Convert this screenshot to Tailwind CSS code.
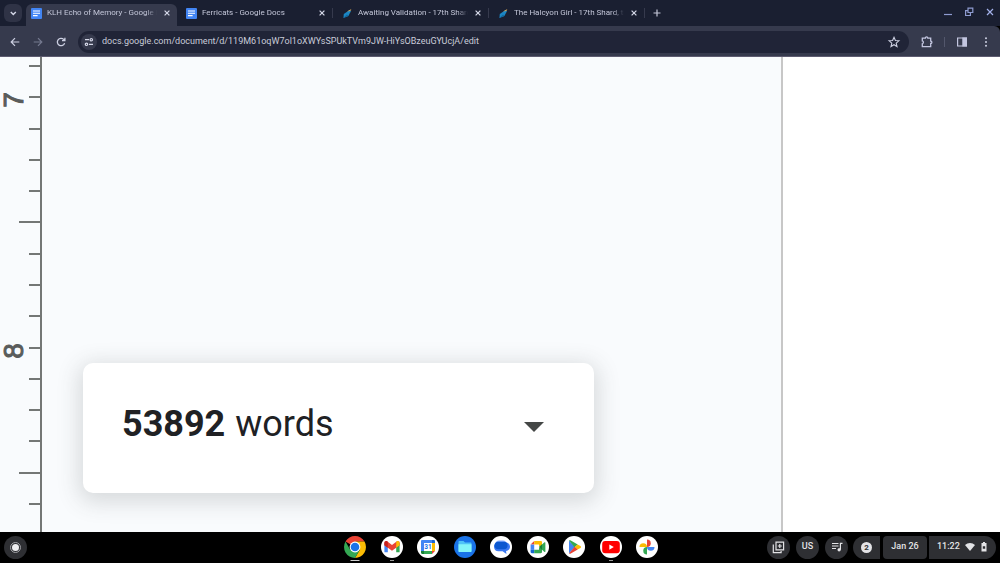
<!DOCTYPE html>
<html lang="en">

<head>
  <meta charset="UTF-8">
  <meta name="viewport" content="width=device-width, initial-scale=1.0">
  <title>KLH Echo of Memory - Google Docs</title>
  <script src="https://cdn.jsdelivr.net/npm/@tailwindcss/browser@4"></script>
</head>

<body class="h-screen flex flex-col overflow-hidden bg-black font-['Roboto',sans-serif]">

  <!-- Tab strip -->
  <header class="h-[26px] shrink-0 flex bg-[#1a1f31] text-[#c3c6d8]">
    <button aria-label="Search tabs" class="w-[18px] h-[18px] ml-1 mt-1 rounded-md bg-[#2f3346] flex items-center justify-center">
      <svg class="w-[18px] h-[18px]" viewBox="0 0 18 18" fill="none" stroke="#d5d8e8" stroke-width="1.4"><path d="M6.8 7.9 9.3 10.4l2.5-2.5" /></svg>
    </button>
    <nav id="tabs" class="flex ml-1" aria-label="Tabs"></nav>
    <button aria-label="New tab" class="w-6 h-[26px] flex items-center justify-center">
      <svg class="w-2 h-2" viewBox="0 0 8 8" stroke="#c3c6d8" stroke-width="1.2"><path d="M4 .5v7M.5 4h7" /></svg>
    </button>
    <div class="ml-auto flex items-center pr-1 gap-[9px] h-6">
      <button aria-label="Minimize" class="w-3 h-3"><svg viewBox="0 0 12 12" stroke="#8e9bd0" stroke-width="1.2"><path d="M2 8.5h8" /></svg></button>
      <button aria-label="Restore" class="w-3 h-3"><svg viewBox="0 0 12 12" fill="none" stroke="#8e9bd0" stroke-width="1.2"><path d="M5 2.2h4.8v4.3H5zM4.4 4.7H2.6v4.8h4.8V7" /></svg></button>
      <button aria-label="Close" class="w-3 h-3"><svg viewBox="0 0 12 12" stroke="#a3b1ea" stroke-width="1.2"><path d="m3 3 6 6M9 3 3 9" /></svg></button>
    </div>
  </header>

  <!-- Toolbar -->
  <div class="h-[31px] shrink-0 flex items-center bg-[#363a4d] border-b border-[#5d5b70] rounded-tr-md pt-px pr-2">
    <div class="flex w-[78px] pl-[9px] gap-[11px]">
      <button aria-label="Back" class="w-3 h-3"><svg viewBox="0 0 12 12" fill="none" stroke="#cdd0e2" stroke-width="1.2"><path d="M10.3 6H2.4M6 2.2 2.2 6 6 9.8" /></svg></button>
      <button aria-label="Forward" class="w-3 h-3"><svg viewBox="0 0 12 12" fill="none" stroke="#757a90" stroke-width="1.2"><path d="M1.7 6h7.9M6 2.2 9.8 6 6 9.8" /></svg></button>
      <button aria-label="Reload" class="w-3 h-3"><svg viewBox="0 0 12 12" fill="none" stroke="#cdd0e2" stroke-width="1.3"><path d="M9.6 7.1A3.7 3.7 0 1 1 8.7 3.4L9.8 4.5M9.9 1.8v2.9H7" /></svg></button>
    </div>
    <div class="flex-1 h-[22px] rounded-full bg-[#202437] flex items-center pl-[3px] pr-2">
      <button aria-label="View site information" class="w-4 h-4 rounded-full bg-[#363a4d] flex items-center justify-center">
        <svg class="w-[10px] h-[10px]" viewBox="0 0 10 10" fill="none" stroke="#d5d8e8" stroke-width="1.2"><path d="M5 2.7H1M9 7.3H5" /><circle cx="7.3" cy="2.7" r="1.2" /><circle cx="2.5" cy="7.3" r="1.2" /></svg>
      </button>
      <input type="text" aria-label="Address" class="flex-1 min-w-0 ml-[5px] bg-transparent text-[9px] text-[#c9ccd9] outline-none" value="docs.google.com/document/d/119M61oqW7ol1oXWYsSPUkTVm9JW-HiYsOBzeuGYUcjA/edit">
      <button aria-label="Bookmark this tab" class="w-[14px] h-[14px]"><svg viewBox="0 0 14 14" fill="none" stroke="#cdd0e2" stroke-width="1.1"><path d="m7 2.3 1.4 3.2 3.5.3-2.7 2.3.8 3.4-3-1.8-3 1.8.8-3.4-2.7-2.3 3.5-.3z" /></svg></button>
    </div>
    <div class="flex items-center ml-[11px]">
      <button aria-label="Extensions" class="w-[14px] h-[14px]"><svg viewBox="0 0 14 14" fill="none" stroke="#c3c6e0" stroke-width="1.3"><path d="M2.3 3.1h3.1a1.2 1.2 0 0 1 2.4 0h2.9v3a1.2 1.2 0 0 1 0 2.4v3.1H2.3V8.8a1.5 1.5 0 0 0 0-2.9z" /></svg></button>
      <div class="w-px h-[10px] bg-[#53576c] ml-[10px] mr-[11px]"></div>
      <button aria-label="Side panel" class="w-3 h-3"><svg viewBox="0 0 12 12" fill="none" stroke="#c3c6e0" stroke-width="1.2"><path d="M1.6 2h8.8v8H1.6z" /><path fill="#c3c6e0" d="M6.9 2h3.5v8H6.9z" /></svg></button>
      <button aria-label="Menu" class="w-3 h-3 ml-3"><svg viewBox="0 0 12 12" fill="#cdd0e2"><circle cx="6" cy="2.2" r="1" /><circle cx="6" cy="6" r="1" /><circle cx="6" cy="9.8" r="1" /></svg></button>
    </div>
  </div>

  <!-- Document -->
  <main class="flex-1 min-h-0 flex bg-[#f9fbfd]">
    <div id="ruler" class="w-[42px] shrink-0 flex flex-col justify-between items-end border-r-2 border-[#747775] pt-2 pb-[27px]"></div>
    <section class="flex-1 flex items-end pl-[41px] pb-[39px] border-r-2 border-[#c7c7c7]">
      <button class="w-[511px] h-[130px] rounded-[10px] bg-white flex items-center justify-between pl-[39px] pr-[50px] pb-2 shadow-[0_5px_22px_4px_rgba(60,64,67,0.18)] text-[#202124]">
        <span class="flex gap-[10px] text-[36px] leading-10"><b class="font-bold">53892</b> <span>words</span></span>
        <svg class="w-5 h-[10px] mt-[6px]" viewBox="0 0 20 10" fill="#444746"><path d="M0 0h20L10 10z" /></svg>
      </button>
    </section>
    <aside class="w-[217px] shrink-0 bg-white"></aside>
  </main>

  <!-- Shelf -->
  <footer class="h-[31px] shrink-0 flex items-center px-1 pb-px bg-black text-[#e3e3e6]">
    <div class="flex-1">
      <button aria-label="Launcher" class="w-[23px] h-[23px] rounded-full bg-[#2e2f33] flex items-center justify-center">
        <span class="w-[11px] h-[11px] rounded-full border border-[#a0a1a5] bg-[#2e2f33] flex items-center justify-center"><span class="w-[7px] h-[7px] rounded-full bg-[#eeeef0]"></span></span>
      </button>
    </div>

    <nav id="apps" class="w-[314px] ml-[2px] flex justify-between" aria-label="Apps"></nav>

    <div class="flex-1 flex justify-end text-[9px] font-medium">
      <button aria-label="Screen capture" class="w-[23px] h-[23px] mr-[6px] rounded-full bg-[#2e2f33] flex items-center justify-center">
        <svg class="w-[13px] h-[13px]" viewBox="0 0 13 13" fill="none" stroke="#e3e3e6" stroke-width="1.2"><path d="M4 1.2h7.6v7.6H4zM1.3 3.6v8h7.8V10M7.8 3v4M5.8 5h4" /></svg>
      </button>
      <button class="w-[23px] h-[23px] mr-[6px] rounded-full bg-[#2e2f33]">US</button>
      <button aria-label="Media controls" class="w-[23px] h-[23px] mr-[5px] rounded-full bg-[#2e2f33] flex items-center justify-center">
        <svg class="w-3 h-3" viewBox="0 0 12 12" fill="none" stroke="#e3e3e6" stroke-width="1.2"><path d="M1 2.5h6.5M1 5h6.5M1 7.5h4M11.5 2.3H9.4v6.4" /><circle cx="8.1" cy="8.8" r="1.3" fill="#e3e3e6" stroke="none" /><circle cx="8.1" cy="8.8" r="1" /></svg>
      </button>
      <button aria-label="2 notifications" class="w-[27px] h-[23px] mr-[3px] rounded-l-full rounded-r-sm bg-[#2e2f33] flex items-center justify-center">
        <span class="w-[11px] h-[11px] rounded-full bg-[#e3e3e6] text-[#2e2f33] text-[8px] leading-[11px] font-bold">2</span>
      </button>
      <button class="w-11 h-[23px] mr-[2px] rounded-sm bg-[#2e2f33]">Jan 26</button>
      <button class="w-[67px] h-[23px] rounded-r-full rounded-l-sm bg-[#2e2f33] flex items-center pl-2 gap-[5px]">
        11:22
        <svg class="w-[10px] h-2" viewBox="0 0 10 8" fill="#e3e3e6"><path d="M0 2a7.4 7.4 0 0 1 10 0L5 8z" /></svg>
        <svg class="w-[6px] h-[10px] ml-px" viewBox="0 0 6 10" fill="#e3e3e6"><path d="M2 0h2v1.1h1.5V9.6h-5V1.1H2zM1.8 4.2v2.6h2.4V4.2z" fill-rule="evenodd" /></svg>
      </button>
    </div>
  </footer>

  <script>
    const docIcon = `<svg class="w-[11px] h-[11px] shrink-0" viewBox="0 0 11 11"><rect width="11" height="11" rx="1" fill="#4285f4"/><path d="M2 3h7M2 5.3h7M2 7.6h4.6" stroke="#fff" stroke-width="1.1"/></svg>`;
    const shardIcon = `<svg class="w-[11px] h-[11px] shrink-0" viewBox="0 0 11 11"><path d="M1.4 10 1.8 6 7.6 2 9 3 6.4 8z" fill="#1b86c4"/><path d="M1.4 10 5 6.4 6.4 8z" fill="#12679c"/><path d="M5 3.6 9.4.9 8.4 3z" fill="#d6a654"/></svg>`;

    const tabs = [
      { title: 'KLH Echo of Memory - Google Docs', icon: docIcon, active: true },
      { title: 'Ferricats - Google Docs', icon: docIcon },
      { title: 'Awaiting Validation - 17th Shard, the Official', icon: shardIcon },
      { title: 'The Halcyon Girl - 17th Shard, the Official', icon: shardIcon }
    ];

    const apps = [
      {
        name: 'Chrome',
        mark: 'w-[9px] bg-[#d0d0d0]',
        icon: `<path d="M11 11 1.5 5.5A11 11 0 0 1 20.5 5.5H11z" fill="#ea4335"/><path d="M11 11V5.5h9.5A11 11 0 0 1 11 22l4.8-8.2z" fill="#fbbc04"/><path d="M11 11l4.8 2.8L11 22A11 11 0 0 1 1.5 5.5l4.7 8.3z" fill="#34a853"/><circle cx="11" cy="11" r="5.4" fill="#fff"/><circle cx="11" cy="11" r="4.3" fill="#1a73e8"/>`
      },
      {
        name: 'Gmail',
        mark: 'w-1 bg-[#9a9a9a]',
        icon: `<circle cx="11" cy="11" r="11" fill="#fff"/><path d="M3.4 7v9.2h3.4V9.5z" fill="#4285f4"/><path d="M18.6 7v9.2h-3.4V9.5z" fill="#34a853"/><path d="M3.4 9.2V7c0-1.7 1.8-2.4 3-1.5L11 9l4.6-3.5c1.2-.9 3-.2 3 1.5v2.2L11 14.8z" fill="#ea4335"/><path d="M15.2 6v5.7l3.4-2.5V7c0-1.7-1.8-2.4-3-1.5z" fill="#fbbc04"/><path d="M3.4 9.2V7c0-1.7 1.8-2.4 3-1.5l.4.3v5.9z" fill="#c5221f"/>`
      },
      {
        name: 'Calendar',
        icon: `<circle cx="11" cy="11" r="11" fill="#fff"/><path d="M4 5.2C4 4.5 4.5 4 5.2 4H15v3H7v8H4z" fill="#4285f4"/><path d="M15 4h1.8c.7 0 1.2.5 1.2 1.2V7h-3z" fill="#1967d2"/><path d="M15 7h3v8h-3z" fill="#fbbc04"/><path d="M7 15h8v3H7z" fill="#34a853"/><path d="M4 15h3v3H5.2c-.7 0-1.2-.5-1.2-1.2z" fill="#188038"/><path d="M15 15h3l-3 3z" fill="#ea4335"/><text x="11" y="13.4" text-anchor="middle" font-size="6.5" font-weight="700" fill="#1a73e8">31</text>`
      },
      {
        name: 'Files',
        icon: `<circle cx="11" cy="11" r="11" fill="#1a73e8"/><path d="M4.5 6c0-.6.4-1 1-1h4l1.5 1.6h5.5c.6 0 1 .4 1 1V15c0 .6-.4 1-1 1h-11c-.6 0-1-.4-1-1z" fill="#4fc3f7"/><path d="M4.5 8.3h13V15c0 .6-.4 1-1 1h-11c-.6 0-1-.4-1-1z" fill="#84f5fa"/>`
      },
      {
        name: 'Messages',
        icon: `<circle cx="11" cy="11" r="11" fill="#fff"/><rect x="5.5" y="4.4" width="11" height="7" rx="3.5" fill="#82aaff"/><path d="M7.5 6.5h8a4.2 4.2 0 0 1 .6 8.4l.3 3-3.8-2.7H8.5a4.4 4.4 0 0 1-1-8.7z" fill="#3a78f2"/><rect x="4.6" y="5.8" width="13" height="7.4" rx="3.7" fill="#0b57d0"/>`
      },
      {
        name: 'Meet',
        icon: `<circle cx="11" cy="11" r="11" fill="#fff"/><path d="M3.6 8.6 7.2 5v3.6z" fill="#ea4335"/><path d="M3.6 8.6h3.6v5.2H3.6z" fill="#4285f4"/><path d="M3.6 13.8h3.6v3.4H4.8c-.7 0-1.2-.5-1.2-1.2z" fill="#1967d2"/><path d="M7.2 5h6.6c.7 0 1.2.5 1.2 1.2V11l-3-1V8.6H7.2z" fill="#fbbc04"/><path d="M7.2 13.8H12V12l3-1v5c0 .7-.5 1.2-1.2 1.2H7.2z" fill="#34a853"/><path d="M12 11l5.5-4.7c.4-.3.9-.1.9.4v8.8c0 .5-.5.7-.9.4z" fill="#34a853"/><path d="M12 11l3-2.6v5.3z" fill="#188038"/>`
      },
      {
        name: 'Play Store',
        icon: `<circle cx="11" cy="11" r="11" fill="#fff"/><path d="M6 4.6v12.8l6-6.4z" fill="#4285f4"/><path d="M6 4.6c.3-.5.9-.6 1.4-.3l7.3 4.2L11.6 11.4z" fill="#34a853"/><path d="m14.5 8.4 3 1.7c.7.4.7 1.4 0 1.8l-3 1.7L11.6 11z" fill="#fbbc04"/><path d="M6 17.4c.3.5.9.6 1.4.3l7.3-4.2L11.6 10.8z" fill="#ea4335"/>`
      },
      {
        name: 'YouTube',
        mark: 'w-1 bg-[#9a9a9a]',
        icon: `<circle cx="11" cy="11" r="11" fill="#fff"/><rect x="2.2" y="5" width="17.6" height="12.2" rx="3" fill="#f00"/><path d="m9.3 8.5 4.5 2.6-4.5 2.6z" fill="#fff"/>`
      },
      {
        name: 'Photos',
        icon: `<circle cx="11" cy="11" r="11" fill="#fff"/><path d="M11 3.5A3.75 3.75 0 0 1 11 11z" fill="#ea4335"/><path d="M18.5 11A3.75 3.75 0 0 1 11 11z" fill="#4285f4"/><path d="M11 18.5A3.75 3.75 0 0 1 11 11z" fill="#34a853"/><path d="M3.5 11A3.75 3.75 0 0 1 11 11z" fill="#fbbc04"/>`
      }
    ];

    document.getElementById('tabs').innerHTML = tabs.map(t => `
      <div class="${t.active ? 'w-[151px] mt-1 rounded-t-md bg-[#363a4d] pl-[5px]' : 'w-[156px] pt-1 pl-[9px]'} flex">
        <a href="#" class="flex items-center gap-[5px] h-[18px] flex-1 min-w-0">
          ${t.icon}
          <span class="w-[110px] overflow-hidden whitespace-nowrap text-[8px] [mask-image:linear-gradient(to_right,black_90%,transparent)]">${t.title}</span>
        </a>
        <button aria-label="Close tab" class="w-3 h-[18px] mr-1 flex items-center justify-center">
          <svg class="w-[6px] h-[6px]" viewBox="0 0 6 6" stroke="#d5d8e8" stroke-width="1.2"><path d="m.6.6 4.8 4.8M5.4.6.6 5.4"/></svg>
        </button>
        ${t.active ? '' : '<span class="w-px h-[10px] mt-1 bg-[#363a4d]"></span>'}
      </div>
    `).join('');

    // eighth-inch marks, longer on each half inch
    const labels = { 1: '7', 9: '8' };
    document.getElementById('ruler').innerHTML = Array.from({ length: 15 }, (_, i) => `
      <div class="relative h-[2px] bg-[#747775] ${i % 8 === 5 ? 'w-[21px]' : 'w-[11px]'}">
        ${labels[i] ? `<span class="absolute right-[14px] -top-1 w-6 h-4 flex items-center justify-center"><span class="-rotate-90 text-[28px] leading-6 text-[#5a5c5b] [-webkit-text-stroke:1px_#5a5c5b] font-['Liberation_Sans',sans-serif]">${labels[i]}</span></span>` : ''}
      </div>
    `).join('');

    document.getElementById('apps').innerHTML = apps.map(a => `
      <button aria-label="${a.name}" class="relative w-[22px] h-[22px]">
        <svg class="w-[22px] h-[22px]" viewBox="0 0 22 22">${a.icon}</svg>
        ${a.mark ? `<span class="absolute left-1/2 -translate-x-1/2 -bottom-[3px] h-px ${a.mark}"></span>` : ''}
      </button>
    `).join('');
  </script>
</body>

</html>
